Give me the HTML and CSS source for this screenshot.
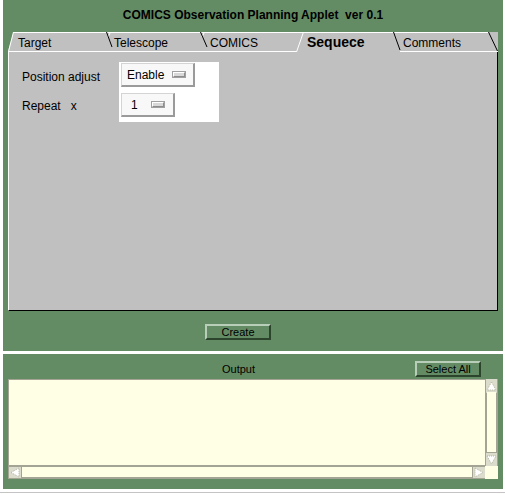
FILE: index.html
```html
<!DOCTYPE html>
<html>
<head>
<meta charset="utf-8">
<title>COMICS Observation Planning Applet</title>
<link rel="stylesheet" href="styles.css">
</head>
<body>
<div class="frame">
  <div class="top">
    <div class="title">COMICS Observation Planning Applet&nbsp; ver 0.1</div>
    <div class="tabs">
      <svg class="tab-lines" width="490" height="20" viewBox="0 0 490 20">
        <polygon points="0,0 5.5,0 0,19" fill="#648c64"/>
        <line x1="5" y1="0.5" x2="481" y2="0.5" stroke="#fff" stroke-width="1"/>
        <line x1="0" y1="19.5" x2="288.5" y2="19.5" stroke="#fff" stroke-width="1"/>
        <line x1="392" y1="19.5" x2="490" y2="19.5" stroke="#fff" stroke-width="1"/>
        <line x1="0.5" y1="19.5" x2="5.5" y2="0" stroke="#fff" stroke-width="1"/>
        <line x1="288.5" y1="20" x2="295.5" y2="0" stroke="#fff" stroke-width="1"/>
        <line x1="100" y1="5" x2="102.5" y2="0" stroke="#fff" stroke-width="1"/>
        <line x1="194" y1="5" x2="196.5" y2="0" stroke="#fff" stroke-width="1"/>
        <line x1="98.5" y1="0" x2="104" y2="15" stroke="#000" stroke-width="1"/>
        <line x1="192.5" y1="0" x2="199" y2="15" stroke="#000" stroke-width="1"/>
        <line x1="385.5" y1="0" x2="392" y2="18" stroke="#000" stroke-width="1"/>
        <line x1="480.5" y1="0" x2="489.5" y2="19" stroke="#000" stroke-width="1"/>
      </svg>
      <span class="tab tab-target">Target</span>
      <span class="tab tab-telescope">Telescope</span>
      <span class="tab tab-comics">COMICS</span>
      <span class="tab tab-seq active">Sequece</span>
      <span class="tab tab-comments">Comments</span>
    </div>
    <div class="panel">
      <div class="labels">
        <div class="lbl">Position adjust</div>
        <div class="lbl lbl-second">Repeat &nbsp;&nbsp;x</div>
      </div>
      <div class="optbox">
        <div class="opt opt-enable"><span class="opt-text">Enable</span><span class="ind"></span></div>
        <div class="opt opt-repeat"><span class="opt-text">1</span><span class="ind"></span></div>
      </div>
    </div>
    <div class="actions">
      <button class="btn btn-create">Create</button>
    </div>
  </div>
  <div class="bottom">
    <div class="outrow">
      <span class="outlbl">Output</span>
      <button class="btn btn-select">Select All</button>
    </div>
    <div class="textarea">
      <div class="ta-text"></div>
      <div class="vscroll">
        <div class="arrow"><svg width="11" height="12" viewBox="0 0 11 12"><polygon points="5.5,2 10,10 1,10" fill="#fff" stroke="#b4b4a4" stroke-width="1" stroke-dasharray="1 1"/></svg></div>
        <div class="vtrack"></div>
        <div class="arrow"><svg width="11" height="12" viewBox="0 0 11 12"><polygon points="1,2 10,2 5.5,10" fill="#fff" stroke="#b4b4a4" stroke-width="1" stroke-dasharray="1 1"/></svg></div>
      </div>
      <div class="hscroll">
        <div class="harrow"><svg width="12" height="11" viewBox="0 0 12 11"><polygon points="2,5.5 10,1 10,10" fill="#fff" stroke="#b4b4a4" stroke-width="1" stroke-dasharray="1 1"/></svg></div>
        <div class="htrack"></div>
        <div class="harrow"><svg width="12" height="11" viewBox="0 0 12 11"><polygon points="2,1 10,5.5 2,10" fill="#fff" stroke="#b4b4a4" stroke-width="1" stroke-dasharray="1 1"/></svg></div>
      </div>
      <div class="corner"></div>
    </div>
  </div>
  <div class="baseline"></div>
</div>
</body>
</html>
```

FILE: styles.css
```css
html, body {
  margin: 0;
  padding: 0;
}
body {
  width: 505px;
  height: 494px;
  background: #ffffff;
  font-family: "Liberation Sans", Arial, sans-serif;
  color: #000;
  overflow: hidden;
}
.frame {
  margin-left: 3px;
  width: 500px;
}
.top {
  height: 351px;
  background: #648c64;
  padding: 0 5px;
  box-sizing: border-box;
}
.title {
  height: 32px;
  line-height: 30px;
  text-align: center;
  font-weight: bold;
  font-size: 12px;
  white-space: nowrap;
}
.tabs {
  position: relative;
  display: flex;
  width: 490px;
  height: 20px;
  background: #c0c0c0;
}
.tab-lines {
  position: absolute;
  left: 0;
  top: 0;
}
.tab {
  position: relative;
  height: 20px;
  line-height: 22px;
  font-size: 12px;
  box-sizing: border-box;
  white-space: nowrap;
  overflow: hidden;
}
.tab-target { width: 98px; padding-left: 10px; }
.tab-telescope { width: 94px; padding-left: 8px; }
.tab-comics { width: 96px; padding-left: 10px; }
.tab-seq { width: 104px; padding-left: 11px; }
.tab-comments { width: 98px; padding-left: 3px; }
.tab.active {
  font-weight: bold;
  font-size: 14px;
  line-height: 20px;
}
.panel {
  display: flex;
  align-items: flex-start;
  width: 490px;
  height: 259px;
  box-sizing: border-box;
  background: #c0c0c0;
  border-left: 1px solid #ffffff;
  border-right: 1px solid #000000;
  border-bottom: 1px solid #000000;
  padding: 10px 0 0 13px;
}
.labels {
  width: 97px;
  padding-top: 5px;
  font-size: 12px;
}
.lbl {
  line-height: 20px;
  white-space: nowrap;
}
.lbl-second {
  margin-top: 9px;
}
.optbox {
  width: 100px;
  height: 60px;
  box-sizing: border-box;
  background: #ffffff;
  padding: 1px 0 0 2px;
  display: flex;
  flex-direction: column;
  gap: 6px;
}
.opt {
  display: flex;
  align-items: center;
  height: 24px;
  box-sizing: border-box;
  background: #f8f8f8;
  border-top: 1px solid #d4d4d4;
  border-left: 1px solid #d4d4d4;
  border-right: 2px solid #9a9a9a;
  border-bottom: 2px solid #9a9a9a;
  font-size: 12px;
}
.opt-enable { width: 74px; padding-left: 5px; }
.opt-repeat { width: 54px; padding-left: 9px; }
.opt-enable .ind { margin-left: 9px; }
.opt-repeat .ind { margin-left: 14px; }
.ind {
  width: 12px;
  height: 5px;
  box-sizing: border-box;
  background: #d8d8d8;
  border: 1px solid #8c8c8c;
  border-top-color: #ffffff;
  border-left-color: #ffffff;
  outline: 1px solid #a0a0a0;
}
.actions {
  padding: 13px 0 0 197px;
}
.btn {
  display: block;
  margin: 0;
  padding: 0;
  width: 66px;
  height: 16px;
  box-sizing: border-box;
  background: #648c64;
  border-style: solid;
  border-width: 2px;
  border-color: #b8ceb8 #2c442c #2c442c #b8ceb8;
  font-family: "Liberation Sans", Arial, sans-serif;
  font-size: 11px;
  line-height: 12px;
  color: #000;
  text-align: center;
}
.bottom {
  margin-top: 3px;
  height: 135px;
  background: #648c64;
  padding: 7px 5px 0 5px;
  box-sizing: border-box;
}
.outrow {
  display: flex;
  align-items: center;
  height: 16px;
}
.outlbl {
  margin-left: 214px;
  font-size: 11px;
}
.btn-select {
  margin-left: auto;
  margin-right: 17px;
}
.textarea {
  margin-top: 2px;
  width: 490px;
  height: 100px;
  box-sizing: border-box;
  display: grid;
  grid-template-columns: 1fr 13px;
  grid-template-rows: 1fr 13px;
  background: #ffffe6;
}
.ta-text {
  border-top: 1px solid #a4a494;
  border-left: 1px solid #a4a494;
  border-bottom: 1px solid #a4a494;
  background: #ffffe6;
}
.vscroll {
  display: flex;
  flex-direction: column;
  border-left: 1px solid #a4a494;
  border-right: 1px solid #a4a494;
  background: #ffffe6;
}
.arrow {
  height: 13px;
  background: #dcdccc;
  display: flex;
  align-items: center;
  justify-content: center;
}
.vtrack {
  flex: 1;
  border: 1px solid #a4a494;
  border-top-color: #ffffe6;
  background: #ffffe6;
}
.hscroll {
  display: flex;
  border-top: 1px solid #a4a494;
  border-bottom: 1px solid #a4a494;
  border-left: 1px solid #a4a494;
  background: #ffffe6;
}
.harrow {
  width: 12px;
  background: #dcdccc;
  display: flex;
  align-items: center;
  justify-content: center;
}
.htrack {
  flex: 1;
  border-left: 1px solid #a4a494;
  border-right: 1px solid #a4a494;
  border-bottom: 1px solid #a4a494;
  background: #ffffe6;
}
.corner {
  background: #ffffe6;
}
.baseline {
  margin-top: 3px;
  margin-left: -3px;
  width: 505px;
  height: 1px;
  background: #c4c4c4;
}
```
